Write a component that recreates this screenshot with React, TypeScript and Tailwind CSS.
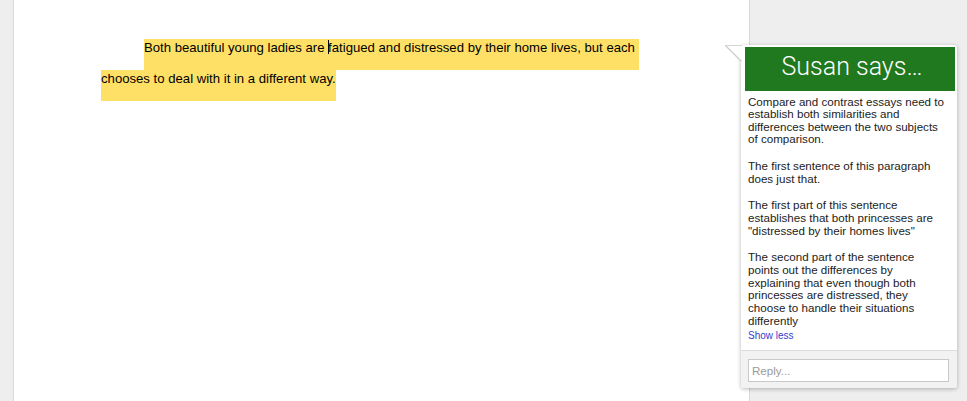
import React from "react";

const sans = { fontFamily: '"Liberation Sans", Arial, sans-serif' };

const paragraphs: string[][] = [
  [
    "Compare and contrast essays need to",
    "establish both similarities and",
    "differences between the two subjects",
    "of comparison.",
  ],
  ["The first sentence of this paragraph", "does just that."],
  [
    "The first part of this sentence",
    "establishes that both princesses are",
    '"distressed by their homes lives"',
  ],
  [
    "The second part of the sentence",
    "points out the differences by",
    "explaining that even though both",
    "princesses are distressed, they",
    "choose to handle their situations",
    "differently",
  ],
];

export default function App() {
  return (
    <div
      className="flex h-[401px] w-full overflow-hidden bg-[#eeeeee]"
      style={sans}
    >
      {/* left gutter */}
      <div className="w-[13px] shrink-0" />

      {/* document page */}
      <div className="w-[737px] shrink-0 border-x border-[#d9d9d9] bg-white pl-[87px] pt-[39px] text-[13.15px] text-black">
        <div className="pl-[43px]">
          <div className="h-[31px] w-fit whitespace-pre bg-[#ffe066] pt-[1px] leading-[16px]">
            {"Both beautiful young ladies are "}
            <span className="relative">
              <span className="absolute left-0 top-0 h-[14px] w-px bg-black" />
            </span>
            {"fatigued and distressed by their home lives, but each "}
          </div>
        </div>
        <div className="h-[31px] w-fit whitespace-pre bg-[#ffe066] pt-[1px] leading-[16px]">
          chooses to deal with it in a different way.
        </div>
      </div>

      {/* comment column */}
      <div className="relative z-10 -ml-[9px] shrink-0 pt-[45px]">
        <div className="relative flex h-[343px] w-[216px] flex-col rounded-[3px] bg-white shadow-[0_1px_4px_rgba(0,0,0,0.28)]">
          {/* speech tail */}
          <svg
            className="absolute -left-[16px] top-0"
            width="17"
            height="18"
            viewBox="0 0 17 18"
          >
            <polygon points="0,0 17,0 17,17.5" fill="#ffffff" />
            <path d="M0 0.5 H17" stroke="#d6d6d6" strokeWidth="1" />
            <path d="M0.7 0.7 L16.5 16.5" stroke="#cfcfcf" strokeWidth="1.4" />
          </svg>

          {/* header */}
          <div
            className="ml-[4px] mr-[2px] mt-[2px] h-[44px] bg-[#21791f] pb-[5px] pl-[4px] text-center text-[25px] font-light leading-[39px] text-white"
            style={{ fontFamily: 'Roboto, "Open Sans", sans-serif' }}
          >
            Susan says…
          </div>

          {/* body */}
          <div className="flex-1 pl-[7px] pt-[4.5px] text-[11.6px] leading-[12.65px] text-[#1c1c1c]">
            {paragraphs.map((p, i) => (
              <div key={i} className={i === 0 ? "" : "mt-[14px]"}>
                {p.map((line, j) => (
                  <div key={j} className="whitespace-nowrap">
                    {line}
                  </div>
                ))}
              </div>
            ))}
            <div className="mt-[3px] text-[10px] leading-[12px] text-[#3340cc]">
              Show less
            </div>
          </div>

          {/* footer */}
          <div className="h-[38px] rounded-b-[3px] border-t border-[#dcdcdc] bg-[#f2f2f2] pl-[7px] pt-[8px]">
            <input
              readOnly
              placeholder="Reply..."
              className="block h-[23px] w-[201px] border border-[#c9c9c9] bg-white pl-[3px] text-[11.6px] text-[#222] outline-none placeholder:text-[#9a9a9a]"
              style={sans}
            />
          </div>
        </div>
      </div>
    </div>
  );
}
